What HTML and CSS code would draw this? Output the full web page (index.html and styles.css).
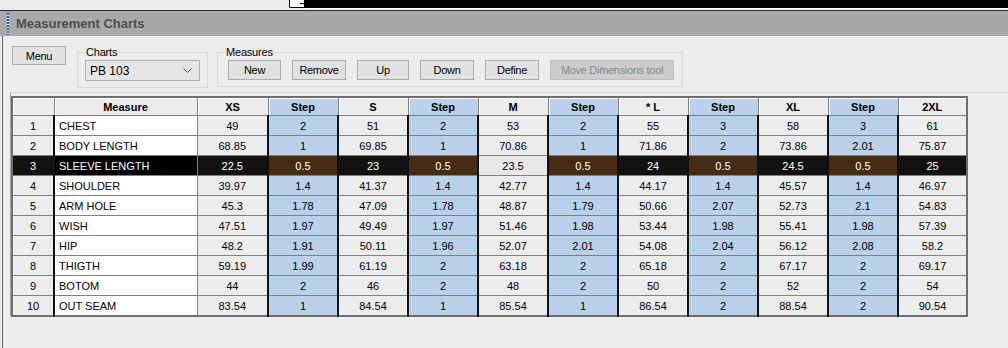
FILE: index.html
```html
<!DOCTYPE html>
<html>
	<head>
		<title>Measurement Charts</title>
		<meta charset="utf-8">
		<link rel="stylesheet" href="styles.css">
	</head>
	<body>
		<div class="top">
			<div class="gap"></div>
			<div class="tab"><span></span></div>
			<div class="dark"></div>
		</div>
		<div class="rule"></div>

		<div class="title">
			<span class="grip"></span>
			<h1>Measurement Charts</h1>
		</div>

		<div class="main">
			<div class="tools">
				<button class="btn menu">Menu</button>

				<fieldset class="group charts">
					<legend>Charts</legend>
					<div class="combo">
						<span>PB 103</span>
						<svg width="9" height="5" viewBox="0 0 9 5"><polyline points="0.5,0.5 4.5,4.5 8.5,0.5" fill="none" stroke="#555" stroke-width="1"/></svg>
					</div>
				</fieldset>

				<fieldset class="group measures">
					<legend>Measures</legend>
					<div class="row">
						<button class="btn w53">New</button>
						<button class="btn w54">Remove</button>
						<button class="btn w52">Up</button>
						<button class="btn w54">Down</button>
						<button class="btn w54">Define</button>
						<button class="btn wide" disabled>Move Dimensions tool</button>
					</div>
				</fieldset>
			</div>

			<div class="panel">
				<table class="grid">
					<colgroup>
						<col style="width:42px"><col style="width:143px"><col style="width:71px">
						<col style="width:70px"><col style="width:70px"><col style="width:70px">
						<col style="width:70px"><col style="width:70px"><col style="width:70px">
						<col style="width:70px"><col style="width:70px"><col style="width:70px">
						<col style="width:69px">
					</colgroup>
					<tr>
						<th></th><th>Measure</th><th>XS</th><th class="step">Step</th><th>S</th><th class="step">Step</th><th>M</th>
						<th class="step">Step</th><th>* L</th><th class="step">Step</th><th>XL</th><th class="step">Step</th><th>2XL</th>
					</tr>
					<tr>
						<td class="no">1</td><td class="name">CHEST</td><td>49</td><td class="step">2</td><td>51</td><td class="step">2</td><td>53</td>
						<td class="step">2</td><td>55</td><td class="step">3</td><td>58</td><td class="step">3</td><td>61</td>
					</tr>
					<tr>
						<td class="no">2</td><td class="name">BODY LENGTH</td><td>68.85</td><td class="step">1</td><td>69.85</td><td class="step">1</td><td>70.86</td>
						<td class="step">1</td><td>71.86</td><td class="step">2</td><td>73.86</td><td class="step">2.01</td><td>75.87</td>
					</tr>
					<tr class="sel">
						<td class="no">3</td><td class="name">SLEEVE LENGTH</td><td>22.5</td><td class="step">0.5</td><td>23</td><td class="step">0.5</td><td class="cur">23.5</td>
						<td class="step">0.5</td><td>24</td><td class="step">0.5</td><td>24.5</td><td class="step">0.5</td><td>25</td>
					</tr>
					<tr>
						<td class="no">4</td><td class="name">SHOULDER</td><td>39.97</td><td class="step">1.4</td><td>41.37</td><td class="step">1.4</td><td>42.77</td>
						<td class="step">1.4</td><td>44.17</td><td class="step">1.4</td><td>45.57</td><td class="step">1.4</td><td>46.97</td>
					</tr>
					<tr>
						<td class="no">5</td><td class="name">ARM HOLE</td><td>45.3</td><td class="step">1.78</td><td>47.09</td><td class="step">1.78</td><td>48.87</td>
						<td class="step">1.79</td><td>50.66</td><td class="step">2.07</td><td>52.73</td><td class="step">2.1</td><td>54.83</td>
					</tr>
					<tr>
						<td class="no">6</td><td class="name">WISH</td><td>47.51</td><td class="step">1.97</td><td>49.49</td><td class="step">1.97</td><td>51.46</td>
						<td class="step">1.98</td><td>53.44</td><td class="step">1.98</td><td>55.41</td><td class="step">1.98</td><td>57.39</td>
					</tr>
					<tr>
						<td class="no">7</td><td class="name">HIP</td><td>48.2</td><td class="step">1.91</td><td>50.11</td><td class="step">1.96</td><td>52.07</td>
						<td class="step">2.01</td><td>54.08</td><td class="step">2.04</td><td>56.12</td><td class="step">2.08</td><td>58.2</td>
					</tr>
					<tr>
						<td class="no">8</td><td class="name">THIGTH</td><td>59.19</td><td class="step">1.99</td><td>61.19</td><td class="step">2</td><td>63.18</td>
						<td class="step">2</td><td>65.18</td><td class="step">2</td><td>67.17</td><td class="step">2</td><td>69.17</td>
					</tr>
					<tr>
						<td class="no">9</td><td class="name">BOTOM</td><td>44</td><td class="step">2</td><td>46</td><td class="step">2</td><td>48</td>
						<td class="step">2</td><td>50</td><td class="step">2</td><td>52</td><td class="step">2</td><td>54</td>
					</tr>
					<tr>
						<td class="no">10</td><td class="name">OUT SEAM</td><td>83.54</td><td class="step">1</td><td>84.54</td><td class="step">1</td><td>85.54</td>
						<td class="step">1</td><td>86.54</td><td class="step">2</td><td>88.54</td><td class="step">2</td><td>90.54</td>
					</tr>
				</table>
			</div>
		</div>
	</body>
</html>
```

FILE: styles.css
```css
body, h1, fieldset, legend, table {
	margin: 0;
	padding: 0;
}

body {
	width: 1008px;
	height: 348px;
	overflow: hidden;
	background-color: #ececec;
	font: 11px "Liberation Sans", Arial, sans-serif;
	color: #000;
}

/* strip at the very top */
.top {
	display: flex;
	height: 10px;
}
.top .gap {
	width: 289px;
}
.top .tab {
	width: 16px;
	height: 8px;
	box-sizing: border-box;
	background-color: #fff;
	border: 1px solid #000;
	border-top: none;
	position: relative;
}
.top .tab span {
	position: absolute;
	right: 0;
	top: 3px;
	width: 4px;
	height: 1px;
	background-color: #000;
}
.top .dark {
	flex: 1;
	height: 8px;
	background-color: #000;
	border-bottom: 1px solid #fff;
}
.rule {
	height: 1px;
	background-color: #2b2b2b;
}

.title {
	height: 25px;
	display: flex;
	align-items: center;
	background-color: #a9a9a9;
}
.title .grip {
	width: 2px;
	height: 22px;
	margin-left: 7px;
	background: repeating-linear-gradient(to bottom, #3458b0 0, #3458b0 2px, #e8e8e8 2px, #e8e8e8 3px);
}
.title h1 {
	margin-left: 7px;
	font: bold 13px "Liberation Sans", Arial, sans-serif;
	color: #4e4e4e;
}

.main {
	margin-left: 2px;
	border-left: 1px solid #6a6a6a;
	height: 312px;
}

.tools {
	display: flex;
	align-items: flex-start;
	height: 56px;
	padding-left: 9px;
}

.btn {
	height: 20px;
	padding: 0;
	box-sizing: border-box;
	background-color: #e1e1e1;
	border: 1px solid #adadad;
	font: 11px "Liberation Sans", Arial, sans-serif;
	letter-spacing: -0.3px;
	color: #000;
}
.btn:disabled {
	background-color: #cccccc;
	border-color: #bfbfbf;
	color: #8a8a8a;
}
.menu {
	width: 54px;
	height: 19px;
	margin-top: 10px;
}
.w52 { width: 52px; }
.w53 { width: 53px; }
.w54 { width: 54px; }
.wide { width: 124px; }

.group {
	margin-top: 9px;
	border: 1px solid #d9d9d9;
	min-width: 0;
}
.group legend {
	padding: 0 1px;
	font: 11px/14px "Liberation Sans", Arial, sans-serif;
	letter-spacing: -0.2px;
	color: #000;
}
.charts {
	width: 131px;
	box-sizing: border-box;
	margin-left: 11px;
	padding: 0 7px 6px 7px;
}
.measures {
	width: 466px;
	box-sizing: border-box;
	margin-left: 9px;
	padding: 0 8px 6px 10px;
}
.measures legend {
	margin-left: -3px;
}

.combo {
	margin-top: 1px;
	height: 21px;
	box-sizing: border-box;
	display: flex;
	align-items: center;
	justify-content: space-between;
	padding: 0 7px 0 4px;
	background-color: #e5e5e5;
	border: 1px solid #adadad;
	font-size: 12px;
}

.measures .row {
	display: flex;
	gap: 11px;
	margin-top: 1px;
}

/* grid */
.panel {
	margin-left: 7px;
	height: 220px;
	border-left: 1px solid #a7a7a7;
	border-top: 1px solid #d8d8d8;
	padding-top: 3px;
}
.grid {
	table-layout: fixed;
	width: 955px;
	border-collapse: collapse;
	border: 2px solid #6e6e6e;
}
.grid th, .grid td {
	height: 19px;
	padding: 0;
	border: 1px solid #808080;
	text-align: center;
	white-space: nowrap;
	overflow: hidden;
	background-color: #ececec;
}
.grid th {
	height: 17px;
	font-weight: bold;
	box-shadow: inset 1px 1px 0 #fff;
}
.grid th.step {
	background-color: #b9d1ea;
}
.grid td.step {
	background-color: #b9d1ea;
	border-left: 2px solid #111;
	border-right: 2px solid #111;
}
.grid td.name {
	text-align: left;
	padding-left: 4px;
	background-color: #fff;
	border-left: 2px solid #111;
}

.grid .sel td {
	background-color: #121212;
	color: #fff;
}
.grid .sel td.step {
	background-color: #452c13;
}
.grid .sel td.name {
	background-color: #000;
}
.grid .sel td.cur {
	background-color: #e8e8e8;
	color: #000;
}
```
